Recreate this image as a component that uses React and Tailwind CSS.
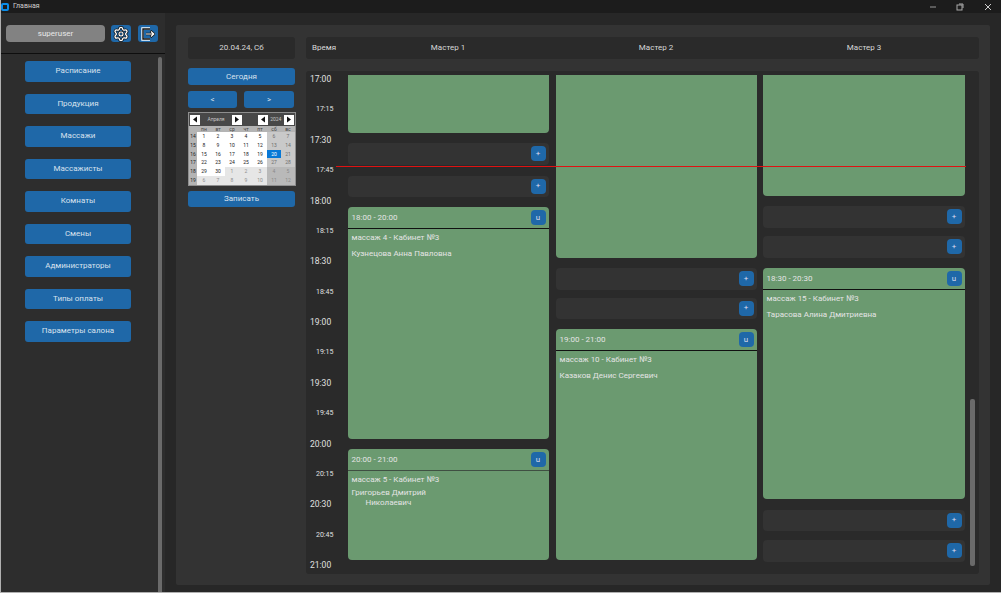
import React from "react";

const F = "font-['Roboto','Noto_Sans',sans-serif]";

function Card({ h, time, title, name, name2, thick }) {
  if (!time) return <div className="w-full rounded-b-[4px] bg-[#6b9a70] shrink-0" style={{ height: h }} />;
  return (
    <div className="w-full rounded-[4px] bg-[#6b9a70] shrink-0 flex flex-col text-[8px] text-[#e4e4e4]" style={{ height: h }}>
      <div className={`h-[22px] shrink-0 flex items-center justify-between pl-[3.5px] pr-[3.5px] border-b ${thick ? "border-[#3f4f42]" : "border-[#111]"}`}>
        <span>{time}</span>
        <span className="w-[15px] h-[15px] rounded-[4px] bg-[#1f68a8] flex items-center justify-center text-[8px] text-[#dde]">u</span>
      </div>
      <div className="pl-[3.5px] pt-[4px] leading-[10px]">{title}</div>
      {name2 ? (
        <div className="pl-[3.5px] pt-[3px] leading-[10px]">
          <div>{name}</div>
          <div className="pl-[14px]">{name2}</div>
        </div>
      ) : (
        <div className="pl-[3.5px] pt-[6px] leading-[10px]">{name}</div>
      )}
    </div>
  );
}

function Slot() {
  return (
    <div className="w-full h-[21.5px] rounded-[4px] bg-[#333333] shrink-0 flex items-center justify-end pr-[3.5px]">
      <span className="w-[15px] h-[15px] rounded-[4px] bg-[#1f68a8] flex items-center justify-center text-[8px] text-[#dde]">+</span>
    </div>
  );
}

const menu = ["Расписание", "Продукция", "Массажи", "Массажисты", "Комнаты", "Смены", "Администраторы", "Типы оплаты", "Параметры салона"];
const big = ["17:00", "17:30", "18:00", "18:30", "19:00", "19:30", "20:00", "20:30", "21:00"];
const times = ["17:00", "17:15", "17:30", "17:45", "18:00", "18:15", "18:30", "18:45", "19:00", "19:15", "19:30", "19:45", "20:00", "20:15", "20:30", "20:45", "21:00"];

const weeks = [
  [14, ["1", "2", "3", "4", "5", "6", "7"]],
  [15, ["8", "9", "10", "11", "12", "13", "14"]],
  [16, ["15", "16", "17", "18", "19", "20", "21"]],
  [17, ["22", "23", "24", "25", "26", "27", "28"]],
  [18, ["29", "30", "1", "2", "3", "4", "5"]],
  [19, ["6", "7", "8", "9", "10", "11", "12"]],
];

function cellClass(w, d) {
  if (w === 2 && d === 5) return "bg-[#0878d6] text-white";
  const other = w === 5 || (w === 4 && d >= 2);
  if (d >= 5) return other ? "bg-[#b9b9b9] text-[#8a8a8a]" : "bg-[#c9c9c9] text-[#6f6f6f]";
  return other ? "bg-[#e6e6e6] text-[#8f8f8f]" : "bg-white text-[#222]";
}

function Arrow({ left }) {
  return (
    <span className="w-[10px] h-[10px] bg-white flex items-center justify-center shrink-0">
      <svg width="6" height="7" viewBox="0 0 6 7">
        <path d={left ? "M5 0.5V6.5L1 3.5Z" : "M1 0.5V6.5L5 3.5Z"} fill="#111" />
      </svg>
    </span>
  );
}

function Calendar() {
  return (
    <div className="mt-[4px] w-[108px] h-[74px] bg-[#8e8e8e] p-[1px] flex flex-col">
      <div className="h-[13px] bg-[#484848] flex items-center px-[1px] text-[5px] text-[#c4c4c4]">
        <Arrow left />
        <span className="w-[33px] text-center">Апреля</span>
        <Arrow />
        <span className="w-[16px]" />
        <Arrow left />
        <span className="w-[17px] text-center">2024</span>
        <Arrow />
      </div>
      <div className="grid grid-cols-[8px_repeat(7,1fr)] grid-rows-[6px_repeat(6,1fr)] flex-1 text-[5px] leading-none text-center bg-[#b4b4b4]">
        <span />
        {["пн", "вт", "ср", "чт", "пт", "сб", "вс"].map((d) => (
          <span key={d} className="flex items-center justify-center text-[#444]">{d}</span>
        ))}
        {weeks.map(([n, ds], w) => (
          <React.Fragment key={n}>
            <span className="flex items-center justify-center text-[#222]">{n}</span>
            {ds.map((x, d) => (
              <span key={d} className={`flex items-center justify-center ${cellClass(w, d)}`}>{x}</span>
            ))}
          </React.Fragment>
        ))}
      </div>
    </div>
  );
}

const GEAR = "M9.671 4.136a2.34 2.34 0 0 1 4.659 0 2.34 2.34 0 0 0 3.319 1.915 2.34 2.34 0 0 1 2.33 4.033 2.34 2.34 0 0 0 0 3.831 2.34 2.34 0 0 1-2.33 4.033 2.34 2.34 0 0 0-3.319 1.915 2.34 2.34 0 0 1-4.659 0 2.34 2.34 0 0 0-3.32-1.915 2.34 2.34 0 0 1-2.33-4.033 2.34 2.34 0 0 0 0-3.831A2.34 2.34 0 0 1 6.35 6.051a2.34 2.34 0 0 0 3.319-1.915";

export default function App() {
  return (
    <div className={`relative w-[1001px] h-[593px] overflow-hidden flex flex-col bg-[#2d2d2d] border-l border-b border-[#b0b0b0] ${F}`}>
      <div className="h-[13px] shrink-0 bg-[#1c1c1c] flex items-center relative">
        <span className="w-[8px] h-[8px] rounded-[2px] border-2 border-[#0a8ce8]" />
        <span className="ml-[4px] text-[7px] text-[#d0d0d0]">Главная</span>
        <div className="ml-auto flex items-center text-[#bbb]">
          <svg width="8" height="8" viewBox="0 0 8 8" className="mr-[19px]"><path d="M1 4H7" stroke="#999" /></svg>
          <svg width="8" height="8" viewBox="0 0 8 8" className="mr-[20px]"><rect x="1" y="2" width="5" height="5" fill="none" stroke="#aaa" /><path d="M3 1H7V5" fill="none" stroke="#aaa" /></svg>
          <svg width="8" height="8" viewBox="0 0 8 8" className="mr-[9px]"><path d="M1 1L7 7M7 1L1 7" stroke="#ccc" /></svg>
        </div>
      </div>

      <div className="flex flex-1 min-h-0">
        {/* Sidebar */}
        <div className="w-[164px] shrink-0 flex flex-col text-[8px] text-[#d8e2ee]">
          <div className="h-[41px] shrink-0 border-b border-[#0e0e0e] flex pt-[12px] pl-[5px]">
            <div className="w-[99px] h-[17px] rounded-[4px] bg-[#828282] flex items-center justify-center text-[#e8e8e8]">superuser</div>
            <div className="ml-[6px] w-[20px] h-[17px] rounded-[3px] bg-[#1f68a8] flex items-center justify-center">
              <svg width="16" height="16" viewBox="0 0 24 24" fill="none">
                <path d={GEAR} stroke="#111" strokeWidth="4" />
                <path d={GEAR} stroke="#ffffff" strokeWidth="2" />
                <circle cx="12" cy="12" r="3" stroke="#111" strokeWidth="3.2" />
                <circle cx="12" cy="12" r="3" stroke="#ffffff" strokeWidth="1.6" />
              </svg>
            </div>
            <div className="ml-[7px] w-[20px] h-[17px] rounded-[3px] bg-[#1f68a8] flex items-center justify-center">
              <svg width="14" height="14" viewBox="0 0 14 14" fill="none">
                <path d="M9 1.5H1.5V12.5H9" stroke="#fff" strokeWidth="2.4" />
                <path d="M9 2H2V12H9" stroke="#111" strokeWidth="1.4" />
                <path d="M5 7H12M9.5 4L13 7L9.5 10" stroke="#111" strokeWidth="2.4" />
                <path d="M5 7H12M10 4.5L12.8 7L10 9.5" stroke="#fff" strokeWidth="1.2" />
              </svg>
            </div>
          </div>
          <div className="flex flex-1 min-h-0">
            <div className="flex-1 pt-[7px] pl-[24px] flex flex-col gap-[12px]">
              {menu.map((m) => (
                <div key={m} className="w-[106px] h-[20.5px] rounded-[3px] bg-[#1f68a8] flex items-center justify-center">{m}</div>
              ))}
            </div>
            <div className="w-[4px] mt-[3px] mr-[3px] bg-[#6a6a6a] rounded-t-[2px]" />
          </div>
        </div>

        {/* Main */}
        <div className="flex-1 min-w-0 bg-[#272727] pt-[12px] pl-[11px] pr-[11px] pb-[7px]">
          <div className="h-full bg-[#333333] rounded-[2px] flex pt-[12px] pl-[12px] pr-[11px] pb-[11px] text-[8px] text-[#d8d8d8]">
            {/* Left controls */}
            <div className="w-[108px] shrink-0 flex flex-col">
              <div className="w-[107px] h-[22px] rounded-[3px] bg-[#2a2a2a] flex items-center justify-center">20.04.24, Сб</div>
              <div className="mt-[9px] w-[107px] h-[17px] rounded-[3px] bg-[#1f68a8] flex items-center justify-center text-[#d8e2ee]">Сегодня</div>
              <div className="mt-[6px] flex w-[106px] justify-between">
                <div className="w-[49px] h-[17px] rounded-[3px] bg-[#1f68a8] flex items-center justify-center text-[#d8e2ee]">&lt;</div>
                <div className="w-[50px] h-[17px] rounded-[3px] bg-[#1f68a8] flex items-center justify-center text-[#d8e2ee]">&gt;</div>
              </div>
              <Calendar />
              <div className="mt-[5px] w-[107px] h-[16px] rounded-[3px] bg-[#1f68a8] flex items-center justify-center text-[#d8e2ee]">Записать</div>
            </div>

            {/* Schedule */}
            <div className="flex-1 min-w-0 ml-[10px] flex flex-col relative">
              <div className="h-[22px] shrink-0 rounded-[3px] bg-[#2a2a2a] flex items-center">
                <span className="w-[30px] pl-[6px] shrink-0">Время</span>
                <div className="flex-1 flex">
                  <span className="w-[224px] text-center">Мастер 1</span>
                  <span className="w-[192px] text-center">Мастер 2</span>
                  <span className="w-[224px] text-center">Мастер 3</span>
                </div>
              </div>
              <div className="mt-[12px] flex-1 min-h-0 rounded-[3px] bg-[#2a2a2a] flex pt-[4px] overflow-hidden">
                <div className="w-[42px] shrink-0 flex flex-col justify-between pb-[3px] -mt-[1px]">
                  {times.map((t) => (
                    <span key={t} className={big.includes(t) ? "pl-[4px] text-[8.5px] leading-[11px] text-[#e0e0e0]" : "pl-[10px] text-[7px] leading-[11px] text-[#e0e0e0]"}>{t}</span>
                  ))}
                </div>
                <div className="w-[201px] shrink-0 flex flex-col">
                  <Card h={58} />
                  <div className="mt-[10px]"><Slot /></div>
                  <div className="mt-[11px]"><Slot /></div>
                  <div className="mt-[10px]"><Card h={232} time="18:00 - 20:00" title="массаж 4 - Кабинет №3" name="Кузнецова Анна Павловна" /></div>
                  <div className="mt-[10px]"><Card h={111} thick time="20:00 - 21:00" title="массаж 5 - Кабинет №3" name="Григорьев Дмитрий" name2="Николаевич" /></div>
                </div>
                <div className="w-[201px] shrink-0 ml-[7px] flex flex-col">
                  <Card h={183} />
                  <div className="mt-[10px]"><Slot /></div>
                  <div className="mt-[8px]"><Slot /></div>
                  <div className="mt-[10px]"><Card h={231} time="19:00 - 21:00" title="массаж 10 - Кабинет №3" name="Казаков Денис Сергеевич" /></div>
                </div>
                <div className="w-[202px] shrink-0 ml-[6px] flex flex-col">
                  <Card h={121} />
                  <div className="mt-[10px]"><Slot /></div>
                  <div className="mt-[8.5px]"><Slot /></div>
                  <div className="mt-[10.5px]"><Card h={231} time="18:30 - 20:30" title="массаж 15 - Кабинет №3" name="Тарасова Алина Дмитриевна" /></div>
                  <div className="mt-[10.5px]"><Slot /></div>
                  <div className="mt-[9px]"><Slot /></div>
                </div>
                <div className="ml-[5px] w-[5px] shrink-0 h-[491px] flex flex-col justify-end">
                  <div className="h-[167px] rounded-[2px] bg-[#6a6a6a]" />
                </div>
              </div>
              {/* current time marker */}
              <div className="absolute left-[30px] right-[13px] top-[129px] h-[1px] bg-[#e01212]" />
            </div>
          </div>
        </div>
      </div>
    </div>
  );
}
